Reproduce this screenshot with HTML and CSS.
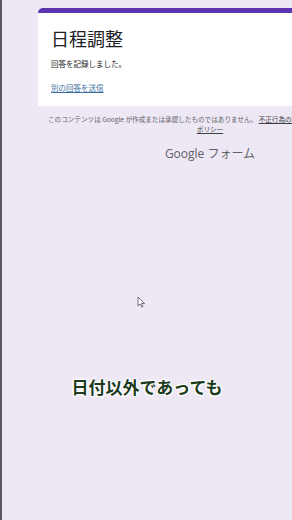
FILE: index.html
```html
<!DOCTYPE html>
<html lang="ja">
<head>
<meta charset="utf-8">
<link rel="stylesheet" href="styles.css">
</head>
<body>
<div class="screen">
  <div class="page">
    <div class="card">
      <h1 class="title">日程調整</h1>
      <p class="msg">回答を記録しました。</p>
      <a class="link" href="#">別の回答を送信</a>
    </div>
    <div class="footer">
      <div class="line1">このコンテンツは Google が作成または承認したものではありません。 <u>不正行為の報告</u> - <u>利用規約</u> - <u>プライバシー</u></div>
      <div class="line2"><u>ポリシー</u></div>
    </div>
    <div class="brand">Google フォーム</div>
  </div>
  <svg class="cursor" width="9" height="12" viewBox="0 0 9 12"><path d="M1 1 L1 10 L3.2 8 L4.8 11.2 L6 10.6 L4.5 7.5 L7.6 7.5 Z" fill="#fff" stroke="#6a6470" stroke-width="0.9" stroke-linejoin="round"/></svg>
  <div class="caption">日付以外であっても</div>
</div>
</body>
</html>
```
FILE: styles.css
```css
html, body {
  margin: 0;
  padding: 0;
}
body {
  width: 292px;
  height: 520px;
  overflow: hidden;
  background: #eee8f5;
  font-family: "Noto Sans CJK JP", "Noto Sans", sans-serif;
}
.screen {
  position: relative;
  width: 290px;
  height: 520px;
  border-left: 2px solid #5e5566;
  overflow: hidden;
}
.page {
  display: flex;
  flex-direction: column;
  padding: 8px 0 0 36px;
}
.card {
  width: 344px;
  box-sizing: border-box;
  background: #fff;
  border-top: 5px solid #5b35b0;
  border-radius: 5px 5px 0 0;
  padding: 13px 12px 12px 13px;
  height: 98px;
}
.title {
  margin: 0;
  font-size: 18px;
  font-weight: 400;
  line-height: 24px;
  color: #202124;
}
.msg {
  margin: 8px 0 0;
  font-size: 7.5px;
  line-height: 12px;
  color: #202124;
}
.link {
  display: block;
  margin-top: 12px;
  font-size: 7.5px;
  line-height: 12px;
  color: #3b6ea5;
  text-decoration: underline;
}
.footer {
  width: 344px;
  font-size: 6.6px;
  line-height: 10px;
  color: #5f6368;
  margin-top: 8px;
}
.line1 {
  white-space: nowrap;
  padding-left: 10px;
}
.line2 {
  text-align: center;
}
.footer u {
  color: #3c4043;
}
.brand {
  width: 344px;
  text-align: center;
  margin-top: 11px;
  font-family: "Open Sans", "Noto Sans CJK JP", sans-serif;
  font-size: 12px;
  line-height: 18px;
  color: #5f6368;
}
.cursor {
  position: absolute;
  left: 135px;
  top: 296px;
}
.caption {
  position: absolute;
  left: 0;
  right: 0;
  top: 375px;
  text-align: center;
  font-size: 17px;
  font-weight: 700;
  line-height: 24px;
  color: #1c3a1c;
  text-shadow: 0 0 2px #fff, 0 0 2px #fff, 0 0 3px #fff, 1px 1px 1px #fff, -1px -1px 1px #fff, 1px -1px 1px #fff, -1px 1px 1px #fff;
}
```
